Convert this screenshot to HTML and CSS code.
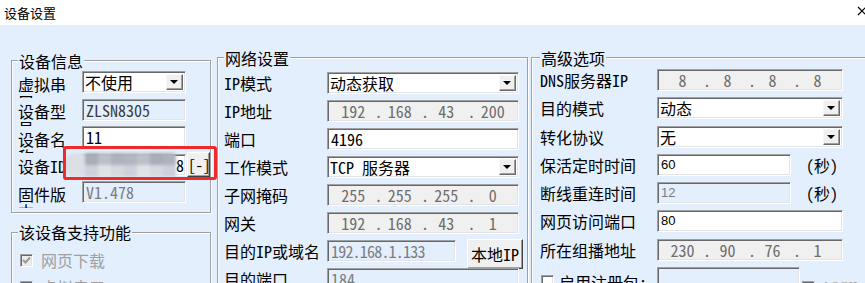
FILE: index.html
```html
<!DOCTYPE html>
<html lang="zh-CN">
<head>
<meta charset="utf-8">
<title>设备设置</title>
<link rel="stylesheet" href="styles.css">
</head>
<body>
<div class="titlebar">
  <span class="title">设备设置</span>
  <svg class="close" width="10" height="10" viewBox="0 0 10 10"><path d="M1 1L9 9M9 1L1 9" stroke="#000" stroke-width="1.2" fill="none"/></svg>
</div>
<div class="client">
  <div class="col-left">
    <div class="group g-info">
      <span class="legend">设备信息</span>
      <div class="rows rows-left">
        <div class="row">
          <span class="lbl lbl-wrap">虚拟串口</span>
          <div class="field select w-left"><span class="val">不使用</span><span class="dd"></span></div>
        </div>
        <div class="row">
          <span class="lbl lbl-wrap">设备型号</span>
          <div class="field ro w-left"><span class="val dark">ZLSN8305</span></div>
        </div>
        <div class="row">
          <span class="lbl lbl-wrap">设备名称</span>
          <div class="field edit w-left"><span class="val">11</span></div>
        </div>
        <div class="row">
          <span class="lbl lbl-wrap">设备ID</span>
          <div class="field edit w-left id-field"><span class="val">8</span></div>
          <button class="btn btn-small">[-]</button>
          <div class="blur">
            <i class="b1"></i><i class="b2"></i><i class="b3"></i><i class="b4"></i><i class="b1"></i><i class="b3"></i><i class="b2"></i><i class="b4"></i>
            <i class="c1"></i><i class="c2"></i><i class="c3"></i><i class="c1"></i><i class="c2"></i><i class="c3"></i><i class="c1"></i><i class="c2"></i>
          </div>
          <div class="redbox"></div>
        </div>
        <div class="row">
          <span class="lbl lbl-wrap">固件版本</span>
          <div class="field ro w-left"><span class="val gray">V1.478</span></div>
        </div>
      </div>
    </div>
    <div class="group g-func">
      <span class="legend">该设备支持功能</span>
      <div class="rows rows-func">
        <div class="cbrow disabled"><span class="cb checked"><svg width="9" height="9" viewBox="0 0 9 9"><path d="M1 4L3.5 6.5L8 1.5" stroke="#9a9a9a" stroke-width="2" fill="none"/></svg></span><span>网页下载</span></div>
        <div class="cbrow disabled"><span class="cb checked"><svg width="9" height="9" viewBox="0 0 9 9"><path d="M1 4L3.5 6.5L8 1.5" stroke="#9a9a9a" stroke-width="2" fill="none"/></svg></span><span>虚拟串口</span></div>
      </div>
    </div>
  </div>

  <div class="group g-net">
    <span class="legend">网络设置</span>
    <div class="rows rows-mid">
      <div class="row"><span class="lbl lbl-mid">IP模式</span><div class="field select w-mid"><span class="val">动态获取</span><span class="dd"></span></div></div>
      <div class="row"><span class="lbl lbl-mid">IP地址</span><div class="field ip w-mid"><span>192</span><span>168</span><span>43</span><span>200</span></div></div>
      <div class="row"><span class="lbl lbl-mid">端口</span><div class="field edit w-mid"><span class="val">4196</span></div></div>
      <div class="row"><span class="lbl lbl-mid">工作模式</span><div class="field select w-mid"><span class="val">TCP 服务器</span><span class="dd"></span></div></div>
      <div class="row"><span class="lbl lbl-mid">子网掩码</span><div class="field ip w-mid"><span>255</span><span>255</span><span>255</span><span>0</span></div></div>
      <div class="row"><span class="lbl lbl-mid">网关</span><div class="field ip w-mid"><span>192</span><span>168</span><span>43</span><span>1</span></div></div>
      <div class="row"><span class="lbl lbl-mid">目的IP或域名</span><div class="field ro w-dest"><span class="val gray tight">192.168.1.133</span></div><button class="btn btn-local">本地IP</button></div>
      <div class="row"><span class="lbl lbl-mid">目的端口</span><div class="field ro w-mid"><span class="val gray">184</span></div></div>
    </div>
  </div>

  <div class="group g-adv">
    <span class="legend">高级选项</span>
    <div class="rows rows-right">
      <div class="row"><span class="lbl lbl-right">DNS服务器IP</span><div class="field ip w-right"><span>8</span><span>8</span><span>8</span><span>8</span></div></div>
      <div class="row"><span class="lbl lbl-right">目的模式</span><div class="field select w-right"><span class="val">动态</span><span class="dd"></span></div></div>
      <div class="row"><span class="lbl lbl-right">转化协议</span><div class="field select w-right"><span class="val">无</span><span class="dd"></span></div></div>
      <div class="row"><span class="lbl lbl-right">保活定时时间</span><div class="field edit w-short"><span class="val sans">60</span></div><span class="unit">(秒)</span></div>
      <div class="row"><span class="lbl lbl-right">断线重连时间</span><div class="field ro w-short"><span class="val sans gray">12</span></div><span class="unit">(秒)</span></div>
      <div class="row"><span class="lbl lbl-right">网页访问端口</span><div class="field edit w-right"><span class="val sans">80</span></div></div>
      <div class="row"><span class="lbl lbl-right">所在组播地址</span><div class="field ip w-right"><span>230</span><span>90</span><span>76</span><span>1</span></div></div>
      <div class="row row-reg">
        <span class="lbl lbl-right reg"><span class="cb"></span><span>启用注册包:</span></span>
        <div class="field ro w-reg"></div>
        <span class="ascii"><span class="cb cb-dis"></span><span class="gray-txt">ASCII</span></span>
      </div>
    </div>
  </div>
</div>
</body>
</html>
```

FILE: styles.css
```css
* { box-sizing: border-box; }

html, body { margin: 0; padding: 0; }

body {
  width: 865px;
  height: 283px;
  overflow: hidden;
  background: #e3effd;
  font-family: "Noto Sans Mono CJK SC", "Noto Sans CJK SC", sans-serif;
  font-size: 16px;
  line-height: 22px;
  color: #000;
}

/* title bar */
.titlebar {
  height: 25px;
  background: #fff;
  display: flex;
  align-items: center;
  padding-left: 4px;
}
.title {
  font-family: "Noto Sans CJK SC", sans-serif;
  font-size: 13px;
  line-height: 16px;
}
.close {
  margin-left: auto;
  margin-right: -2px;
  margin-top: -4px;
}

/* client layout */
.client {
  display: flex;
  align-items: flex-start;
  padding-left: 11px;
}
.col-left {
  width: 200px;
  flex: none;
  margin-top: 35px;
  margin-right: 6px;
}

/* etched group box */
.group {
  position: relative;
  border: 1px solid #a0a0a0;
  box-shadow: inset 1px 1px 0 #fff, 1px 1px 0 #fff;
}
.legend {
  position: absolute;
  left: 6px;
  top: -9.5px;
  line-height: 18px;
  padding: 0 1px;
  background: #e3effd;
  white-space: nowrap;
}
.g-info { width: 200px; }
.g-func { width: 200px; height: 80px; margin-top: 19px; }
.g-net { width: 311px; height: 260px; flex: none; margin-top: 32px; margin-right: 3px; }
.g-adv { width: 360px; height: 260px; flex: none; margin-top: 32px; }
.g-adv .legend { left: 8px; }

/* rows */
.rows { display: flex; flex-direction: column; }
.rows-left { padding: 10px 0 8.5px 6px; gap: 5.5px; }
.rows-mid { padding: 14px 0 0 6px; gap: 6px; }
.rows-right { padding: 11px 0 0 8px; gap: 6.25px; }
.rows-func { padding: 21px 0 0 8px; gap: 14px; }

.row {
  position: relative;
  display: flex;
  align-items: center;
  height: 22px;
}

.lbl { flex: none; white-space: nowrap; }
.lbl-wrap {
  white-space: normal;
  width: 60px;
  margin-right: 4px;
  align-self: flex-start;
  margin-top: 4.5px;
  height: 22.5px;
  line-height: 17px;
  overflow: hidden;
  word-break: break-all;
}
.lbl-mid { width: 103px; }
.lbl-right { width: 117px; }

/* fields */
.field {
  position: relative;
  flex: none;
  height: 22px;
  border: 1px solid;
  border-color: #a0a0a0 #fff #fff #a0a0a0;
  box-shadow: inset 1px 1px 0 #696969, inset -1px -1px 0 #e3e3e3;
  display: flex;
  align-items: center;
  padding: 0 3px;
  overflow: hidden;
}
.field .val { white-space: nowrap; line-height: 20px; }
.edit, .select { background: #fff; }
.ro { background: #e3effd; }
.ip { background: #f0f0f0; }

.w-left { width: 104px; }
.w-mid { width: 192px; }
.w-dest { width: 129px; }
.w-right { width: 186px; }
.w-short { width: 134px; }
.w-reg { width: 143px; }

.dark { color: #3a3a3a; }
.gray { color: #7d7d7d; }
.tight { letter-spacing: -0.8px; }
.sans {
  font-family: "Liberation Sans", sans-serif;
  font-size: 13px;
}

/* select dropdown button */
.select { padding-left: 2px; }
.dd {
  position: absolute;
  right: 2px;
  top: 2px;
  width: 17px;
  height: 16px;
  background: #f0f0f0;
  border: 1px solid;
  border-color: #f8f8f8 #696969 #696969 #f8f8f8;
  box-shadow: inset -1px -1px 0 #a0a0a0;
  display: flex;
  align-items: center;
  justify-content: center;
}
.dd::after {
  content: "";
  border-top: 4px solid #000;
  border-left: 4px solid transparent;
  border-right: 4px solid transparent;
  margin-left: -1px;
}

/* IP address control */
.ip {
  display: grid;
  grid-template-columns: repeat(4, 1fr);
  padding: 0 2px;
  color: #6d6d6d;
}
.ip span {
  position: relative;
  text-align: center;
  line-height: 20px;
}
.ip span + span::before {
  content: ".";
  position: absolute;
  left: -2px;
  top: 0;
}

/* buttons */
.btn {
  flex: none;
  font: inherit;
  color: #000;
  background: #f0f0f0;
  border: 1px solid;
  border-color: #fff #404040 #404040 #fff;
  box-shadow: inset -1px -1px 0 #a0a0a0;
  padding: 0;
  margin: 0;
}
.btn-small {
  width: 23px;
  height: 25px;
  margin-left: 1px;
  line-height: 22px;
  font-size: 15px;
}
.btn-local {
  width: 56px;
  height: 30px;
  margin-left: 11px;
  align-self: flex-start;
  margin-top: -1px;
  line-height: 26px;
}

.id-field { justify-content: flex-end; padding-right: 1px; }

/* privacy blur */
.blur {
  position: absolute;
  left: 45px;
  top: -1px;
  width: 113px;
  height: 25px;
  display: grid;
  grid-template-columns: 22px repeat(7, 13px);
  grid-template-rows: 12px 12px;
  background: #eceef2;
  border-radius: 13px 4px 4px 13px;
  filter: blur(1.6px);
  overflow: hidden;
}
.blur i { display: block; }
.blur .b1 { background: #b1b6c0; }
.blur .b2 { background: #a8adb8; }
.blur .b3 { background: #bcc0c8; }
.blur .b4 { background: #aeb3be; }
.blur .c1 { background: #d6d9df; }
.blur .c2 { background: #cdd1d9; }
.blur .c3 { background: #dfe2e7; }
.blur i:first-child, .blur i:nth-child(9) { background: #dcdfe5; }

.redbox {
  position: absolute;
  left: 45px;
  top: -7.5px;
  width: 154px;
  height: 34px;
  border: 3px solid #ee2b2b;
  border-radius: 3px;
}

/* units */
.unit { margin-left: 15px; white-space: nowrap; }

/* checkboxes */
.cbrow {
  display: flex;
  align-items: center;
  height: 13px;
  gap: 8px;
  white-space: nowrap;
}
.cbrow.disabled { color: #a0a0a0; }
.cb {
  flex: none;
  width: 13px;
  height: 13px;
  background: #fff;
  border: 1px solid;
  border-color: #a0a0a0 #fff #fff #a0a0a0;
  box-shadow: inset 1px 1px 0 #696969, inset -1px -1px 0 #e3e3e3;
  display: flex;
  align-items: center;
  justify-content: center;
}
.cb.checked { background: #ececec; }
.cb-dis { background: #f0f0f0; }

.row-reg { align-items: flex-start; }
.reg {
  display: flex;
  align-items: center;
  gap: 5px;
  padding-left: 1px;
  height: 30px;
  margin-top: 0;
}
.row-reg .w-reg { margin-top: 0; height: 26px; }
.ascii {
  display: flex;
  align-items: center;
  gap: 6px;
  margin-left: 2px;
  margin-top: 10px;
  font-family: "Liberation Serif", serif;
  font-size: 14px;
}
.gray-txt { color: #a0a0a0; }
```
